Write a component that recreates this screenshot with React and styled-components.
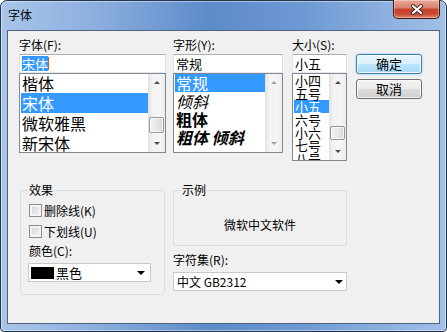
import React from 'react';
import styled, { createGlobalStyle } from 'styled-components';

const GlobalStyle = createGlobalStyle`
  body {
    margin: 0;
    background: #fff;
    font-family: "Noto Sans CJK SC", "Liberation Sans", sans-serif;
    font-size: 12px;
    color: #000;
  }
`;

const Window = styled.div`
  box-sizing: border-box;
  width: 447px;
  height: 332px;
  border: 1px solid #24364e;
  border-radius: 7px 7px 4px 4px;
  padding: 0 6px 7px;
  display: flex;
  flex-direction: column;
  background: linear-gradient(90deg, #a9c5ea 0%, #8eb0df 20%, #5c8bca 47%, #6e9ad4 68%, #a2c0e7 100%);
  box-shadow: inset 0 0 0 1px rgba(255, 255, 255, 0.45);
`;

const TitleBar = styled.div`
  height: 29px;
  display: flex;
  justify-content: space-between;
  align-items: flex-start;
  padding-left: 1px;
`;

const Title = styled.div`
  margin-top: 6px;
  font-size: 12px;
  line-height: 16px;
`;

const CloseButton = styled.div`
  box-sizing: border-box;
  width: 47px;
  height: 19px;
  margin-top: -1px;
  border: 1px solid #40160f;
  border-top: none;
  border-radius: 0 0 5px 5px;
  display: flex;
  align-items: center;
  justify-content: center;
  background: linear-gradient(#eaa99b 0%, #d8806c 45%, #c5402a 50%, #c94a31 78%, #df8a6c 100%);
  box-shadow: inset 0 0 0 1px rgba(255, 255, 255, 0.35);
`;

const Client = styled.div`
  flex: 1;
  border: 1px solid #4f6280;
  background: #f0f0f0;
  padding: 5px 0 0 11px;
  display: flex;
  flex-direction: column;
`;

const TopRow = styled.div`
  display: flex;
  align-items: flex-start;
`;

const Column = styled.div`
  width: ${p => p.$width}px;
  margin-left: ${p => p.$gap || 0}px;
  display: flex;
  flex-direction: column;
`;

const Label = styled.div`
  height: 18px;
  line-height: 18px;
  font-size: 12px;
  white-space: nowrap;
`;

const TextBox = styled.div`
  box-sizing: border-box;
  height: 19px;
  border: 1px solid;
  border-color: #abadb3 #dbdfe6 #e3e9ef #e2e3ea;
  background: #fff;
  padding: 0 2px;
  font-size: 13px;
  line-height: 17px;
  display: flex;
  align-items: center;
`;

const Selected = styled.span`
  background: #3399ff;
  color: #fff;
  line-height: 15px;
`;

const Caret = styled.span`
  width: 1px;
  height: 13px;
  background: #d05a1a;
`;

const ListBox = styled.div`
  box-sizing: border-box;
  height: ${p => p.$height}px;
  border: 1px solid #828790;
  background: #fff;
  display: flex;
  overflow: hidden;
`;

const Items = styled.div`
  flex: 1;
  padding-left: 1px;
  overflow: hidden;
  margin-top: ${p => p.$shift || 0}px;
`;

const Item = styled.div`
  height: ${p => p.$row}px;
  line-height: ${p => p.$row}px;
  font-size: ${p => p.$size}px;
  padding-left: 1px;
  white-space: nowrap;
  font-style: ${p => (p.$italic ? 'italic' : 'normal')};
  font-weight: ${p => (p.$bold ? 700 : 400)};
  background: ${p => (p.$active ? '#3399ff' : 'transparent')};
  color: ${p => (p.$active ? '#fff' : '#000')};
`;

const ScrollBar = styled.div`
  box-sizing: border-box;
  width: 17px;
  display: flex;
  flex-direction: column;
  background: linear-gradient(90deg, #e6e6e6 0%, #f4f4f4 25%, #f4f4f4 75%, #ebebeb 100%);
  border-left: 1px solid #e3e3e3;
`;

const ArrowButton = styled.div`
  height: 17px;
  display: flex;
  align-items: center;
  justify-content: center;
  flex-shrink: 0;
`;

const Triangle = styled.span`
  width: 0;
  height: 0;
  border-left: 3px solid transparent;
  border-right: 3px solid transparent;
  ${p => (p.$down ? 'border-top' : 'border-bottom')}: 3px solid ${p => (p.$disabled ? '#a3a3a3' : '#4d4d4d')};
`;

const Track = styled.div`
  flex: 1;
`;

const Thumb = styled.div`
  box-sizing: border-box;
  height: ${p => p.$height}px;
  margin: ${p => p.$top}px 1px 0 0;
  border: 1px solid #979797;
  border-radius: 2px;
  background: linear-gradient(90deg, #f3f3f3 0%, #e6e6e6 55%, #d8d8d8 100%);
  box-shadow: inset 0 0 0 1px rgba(255, 255, 255, 0.7);
`;

const ButtonColumn = styled.div`
  margin-left: 9px;
  padding-top: 18px;
  display: flex;
  flex-direction: column;
  gap: 5px;
`;

const Button = styled.div`
  box-sizing: border-box;
  width: 66px;
  height: 20px;
  border: 1px solid ${p => (p.$default ? '#3c7fb1' : '#707070')};
  border-radius: 3px;
  font-size: 13px;
  line-height: 18px;
  text-align: center;
  background: ${p =>
    p.$default
      ? 'linear-gradient(#e8f5fc 0%, #d9effc 48%, #bee6fd 50%, #a7d9f5 100%)'
      : 'linear-gradient(#f2f2f2 0%, #ebebeb 48%, #dddddd 50%, #cfcfcf 100%)'};
  box-shadow: inset 0 0 0 1px rgba(255, 255, 255, 0.8)${p => (p.$default ? ', 0 0 2px #5fc5f5' : '')};
`;

const BottomRow = styled.div`
  display: flex;
  align-items: flex-start;
  margin-top: 21px;
`;

const Group = styled.fieldset`
  box-sizing: border-box;
  width: ${p => p.$width}px;
  margin: 0 0 0 ${p => p.$offset || 0}px;
  padding: 0 8px ${p => p.$bottom || 0}px;
  border: 1px solid #d5dfe5;
  border-radius: 3px;
  min-width: 0;
`;

const Legend = styled.legend`
  padding: 0 1px;
  margin-left: -1px;
  line-height: 16px;
  font-size: 12px;
`;

const CheckRow = styled.div`
  height: 17px;
  margin-top: 4px;
  display: flex;
  align-items: center;
  gap: 2px;
  font-size: 12px;
`;

const CheckBox = styled.span`
  box-sizing: border-box;
  width: 13px;
  height: 13px;
  border: 1px solid #8e8f8f;
  background: linear-gradient(135deg, #cbcfd5 0%, #e7e9ec 60%, #f7f7f7 100%);
  box-shadow: inset 0 0 0 2px #f4f4f4;
`;

const GroupLabel = styled.div`
  margin-top: ${p => p.$top}px;
  line-height: 16px;
  height: 16px;
  font-size: 12px;
`;

const Select = styled.div`
  box-sizing: border-box;
  width: ${p => p.$width}px;
  height: 19px;
  margin: 4px 0 0 ${p => p.$offset || 0}px;
  border: 1px solid #c9c9c9;
  background: #fff;
  display: flex;
  align-items: center;
  padding-left: ${p => p.$pad}px;
  font-size: ${p => p.$size}px;
`;

const Swatch = styled.span`
  width: 23px;
  height: 12px;
  background: #000;
  margin-right: 2px;
`;

const DropArrow = styled.span`
  margin-left: auto;
  margin-right: ${p => p.$right}px;
  width: 0;
  height: 0;
  border-left: 4px solid transparent;
  border-right: 4px solid transparent;
  border-top: 4px solid #000;
`;

const RightColumn = styled.div`
  width: 174px;
  margin-left: 8px;
  display: flex;
  flex-direction: column;
`;

const SampleBody = styled.div`
  height: 47px;
  box-sizing: border-box;
  padding-top: 6px;
  display: flex;
  align-items: center;
  justify-content: center;
  font-size: 12px;
`;

const Scroll = ({ thumb, disabled }) => (
  <ScrollBar>
    <ArrowButton><Triangle $disabled={disabled} /></ArrowButton>
    <Track>{thumb && <Thumb $top={thumb.top} $height={thumb.height} />}</Track>
    <ArrowButton><Triangle $down $disabled={disabled} /></ArrowButton>
  </ScrollBar>
);

const fonts = ['楷体', '宋体', '微软雅黑', '新宋体'];
const styles = [
  { name: '常规' },
  { name: '倾斜', italic: true },
  { name: '粗体', bold: true },
  { name: '粗体 倾斜', bold: true, italic: true },
];
const sizes = ['小四', '五号', '小五', '六号', '小六', '七号', '八号'];

export default function App() {
  return (
    <>
      <GlobalStyle />
      <Window>
        <TitleBar>
          <Title>字体</Title>
          <CloseButton>
            <svg width="14" height="11" viewBox="0 0 14 11">
              <path d="M3 2 L11 9 M11 2 L3 9" stroke="#3a2a28" strokeWidth="4" strokeLinecap="round" />
              <path d="M3 2 L11 9 M11 2 L3 9" stroke="#fff" strokeWidth="2.2" strokeLinecap="round" />
            </svg>
          </CloseButton>
        </TitleBar>
        <Client>
          <TopRow>
            <Column $width={147}>
              <Label>字体(F):</Label>
              <TextBox><Selected>宋体</Selected><Caret /></TextBox>
              <ListBox $height={80}>
                <Items $shift={-1}>
                  {fonts.map(f => (
                    <Item key={f} $row={20} $size={16} $active={f === '宋体'}>{f}</Item>
                  ))}
                </Items>
                <Scroll thumb={{ top: 26, height: 16 }} />
              </ListBox>
            </Column>
            <Column $width={110} $gap={7}>
              <Label>字形(Y):</Label>
              <TextBox>常规</TextBox>
              <ListBox $height={80}>
                <Items>
                  {styles.map(s => (
                    <Item key={s.name} $row={18} $size={16} $italic={s.italic} $bold={s.bold} $active={s.name === '常规'}>
                      {s.name}
                    </Item>
                  ))}
                </Items>
                <Scroll disabled />
              </ListBox>
            </Column>
            <Column $width={55} $gap={9}>
              <Label>大小(S):</Label>
              <TextBox>小五</TextBox>
              <ListBox $height={88}>
                <Items>
                  {sizes.map(s => (
                    <Item key={s} $row={13} $size={13} $active={s === '小五'}>{s}</Item>
                  ))}
                </Items>
                <Scroll thumb={{ top: 35, height: 14 }} />
              </ListBox>
            </Column>
            <ButtonColumn>
              <Button $default>确定</Button>
              <Button>取消</Button>
            </ButtonColumn>
          </TopRow>
          <BottomRow>
            <Group $width={145} $offset={1} $bottom={12}>
              <Legend>效果</Legend>
              <CheckRow><CheckBox />删除线(K)</CheckRow>
              <CheckRow><CheckBox />下划线(U)</CheckRow>
              <GroupLabel $top={3}>颜色(C):</GroupLabel>
              <Select $width={123} $offset={-1} $pad={2} $size={13}>
                <Swatch />黑色<DropArrow $right={5} />
              </Select>
            </Group>
            <RightColumn>
              <Group $width={174}>
                <Legend>示例</Legend>
                <SampleBody>微软中文软件</SampleBody>
              </Group>
              <GroupLabel $top={6}>字符集(R):</GroupLabel>
              <Select $width={174} $pad={3} $size={12}>
                中文 GB2312<DropArrow $right={3} />
              </Select>
            </RightColumn>
          </BottomRow>
        </Client>
      </Window>
    </>
  );
}
